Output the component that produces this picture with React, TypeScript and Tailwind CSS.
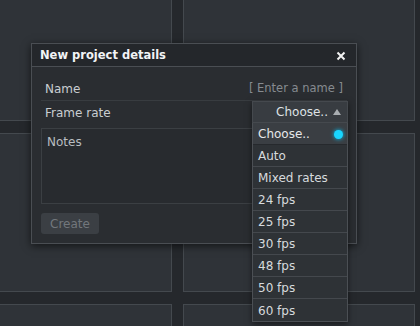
const rates = ["Auto", "Mixed rates", "24 fps", "25 fps", "30 fps", "48 fps", "50 fps", "60 fps"];

const Tile = () => (
  <div className="bg-[#2f3338] border border-[#44494e]" />
);

const App = () => {
  return (
    <div
      className="relative w-[420px] h-[326px] overflow-hidden bg-[#25282c] text-[12px] text-[#c9cdd1]"
      style={{ fontFamily: '"DejaVu Sans", Verdana, sans-serif' }}
    >
      {/* background panels */}
      <div className="-ml-[10px] -mt-[10px] grid grid-cols-[182px_232px] grid-rows-[131px_159px_40px] gap-x-[11px] gap-y-[12px]">
        <Tile />
        <Tile />
        <Tile />
        <Tile />
        <Tile />
        <Tile />
      </div>

      {/* modal */}
      <div className="absolute left-[31px] top-[43px] w-[326px] h-[201px] bg-[#2a2d31] border border-[#4a4e53] shadow-[0_2px_8px_rgba(0,0,0,0.6)] flex flex-col">
        <div className="h-[23px] pt-[2px] bg-[#24272b] border-b border-[#4a4e53] flex items-center justify-between pl-[8px] pr-[10px]">
          <span className="font-bold text-[11.5px] text-[#f2f4f6]">New project details</span>
          <svg width="10" height="10" viewBox="0 0 10 10">
            <path d="M1.5 1.5 L8.5 8.5 M8.5 1.5 L1.5 8.5" stroke="#f2f2f2" strokeWidth="2" />
          </svg>
        </div>
        <div className="flex flex-col px-[9px] pt-[10px]">
          <div className="h-[24px] flex items-center justify-between border-b border-[#383c40] pl-[4px] pr-[4px]">
            <span>Name</span>
            <span className="text-[#868b90] text-[11.5px]">[ Enter a name ]</span>
          </div>
          <div className="h-[24px] flex items-center pl-[4px]">
            <span>Frame rate</span>
          </div>
          <div className="mt-[3px] h-[76px] bg-[#282b2f] border border-[#3b3f43] px-[5px] py-[4px] text-[#b9bdc1]">
            Notes
          </div>
          <div className="mt-[9px]">
            <div className="w-[58px] h-[21px] rounded-[3px] bg-[#3b3f44] text-[#72777c] flex items-center justify-center">
              Create
            </div>
          </div>
        </div>
      </div>

      {/* frame rate dropdown */}
      <div className="absolute left-[252px] top-[101px] w-[96px] flex flex-col shadow-[0_2px_6px_rgba(0,0,0,0.5)]">
        <div className="h-[22px] bg-[#383c41] border border-[#45494e] flex items-center justify-end gap-[5px] pr-[6px] text-[#dfe2e5]">
          <span>Choose..</span>
          <svg width="8" height="6" viewBox="0 0 8 6">
            <path d="M4 0 L8 6 L0 6 Z" fill="#a9adb1" />
          </svg>
        </div>
        <div className="border border-t-0 border-[#4b4f54] bg-[#2e3236]">
          <div className="h-[22px] pt-[1px] bg-[#3a3e43] border-b border-[#26292d] flex items-center justify-between pl-[5px] pr-[4px] text-[#e6e8ea]">
            <span>Choose..</span>
            <span className="w-[9px] h-[9px] rounded-full bg-[#19d6ff] shadow-[0_0_4px_#00c8ff]" />
          </div>
          {rates.map((r) => (
            <div
              key={r}
              className="h-[22px] pt-[1px] border-b border-[#44484d] last:border-b-0 flex items-center pl-[5px] text-[#d7dadd]"
            >
              {r}
            </div>
          ))}
        </div>
      </div>
    </div>
  );
};

export default App;
